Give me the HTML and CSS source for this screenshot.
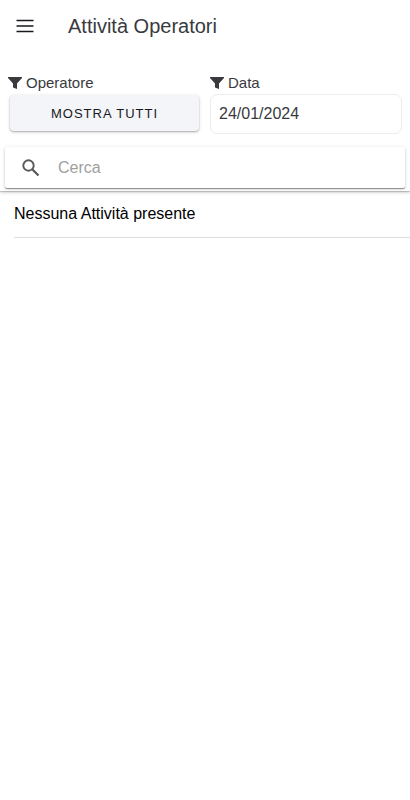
FILE: index.html
```html
<!DOCTYPE html>
<html lang="it">
<head>
<meta charset="utf-8">
<meta name="viewport" content="width=device-width, initial-scale=1">
<title>Attività Operatori</title>
<link rel="stylesheet" href="styles.css">
</head>
<body>
<header class="header">
  <div class="toolbar">
    <button class="menu-button" type="button" aria-label="Menu">
      <svg viewBox="0 0 18 14" width="18" height="14" aria-hidden="true"><path d="M0.500 1.500h17M0.500 7h17M0.500 12.500h17" stroke="currentColor" stroke-width="1.700"/></svg>
    </button>
    <h1 class="title">Attività Operatori</h1>
  </div>
  <div class="filters">
    <div class="filter">
      <label class="filter-label" for="operator">
        <svg viewBox="0 0 14 12" width="14" height="12" aria-hidden="true"><path d="M0 0h14v1L9 6.500V12L5 10.500v-4L0 1z" fill="currentColor"/></svg>
        Operatore
      </label>
      <button class="operator-button" id="operator" type="button">MOSTRA TUTTI</button>
    </div>
    <div class="filter">
      <label class="filter-label" for="date">
        <svg viewBox="0 0 14 12" width="14" height="12" aria-hidden="true"><path d="M0 0h14v1L9 6.500V12L5 10.500v-4L0 1z" fill="currentColor"/></svg>
        Data
      </label>
      <input class="date-input" id="date" type="text" value="24/01/2024">
    </div>
  </div>
  <div class="search">
    <svg viewBox="0 0 18 18" width="18" height="18" aria-hidden="true"><circle cx="6.500" cy="6.500" r="5.200" fill="none" stroke="currentColor" stroke-width="1.900"/><path d="M10.500 10.500l6 6" stroke="currentColor" stroke-width="2.200"/></svg>
    <input class="search-input" type="search" placeholder="Cerca" aria-label="Cerca">
  </div>
</header>
<main>
  <ul class="list">
    <li class="list-item">Nessuna Attività presente</li>
  </ul>
</main>
</body>
</html>
```
FILE: styles.css
```css
* {
  box-sizing: border-box;
}

body {
  margin: 0;
  background: #fff;
  color: #000;
  font: 16px/20px "Liberation Sans", Arial, sans-serif;
}

button,
input {
  margin: 0;
  font-family: inherit;
}

svg {
  display: block;
  flex: none;
}

.header {
  padding-bottom: 3px;
  color: #383a3e;
  box-shadow: 0 1px 1px rgba(0, 0, 0, 0.16), 0 2px 3px rgba(0, 0, 0, 0.14);
}

.toolbar {
  display: flex;
  align-items: center;
  gap: 24px;
  height: 52px;
  padding: 0 10px;
}

.menu-button {
  display: grid;
  place-items: center;
  width: 34px;
  height: 40px;
  padding: 0 4px 0 0;
  border: 0;
  background: none;
  color: #17191c;
}

.title {
  margin: 0;
  font-size: 20px;
  line-height: 24px;
  font-weight: 400;
}

.filters {
  display: grid;
  grid-template-columns: 1fr 1fr;
  gap: 10px;
  padding: 20px 8px 13px;
}

.filter-label {
  display: flex;
  align-items: center;
  gap: 4px;
  height: 22px;
  font-size: 15px;
}

.operator-button {
  display: block;
  width: calc(100% - 3px);
  height: 36px;
  margin: 1px 1px 1px 2px;
  padding: 0;
  border: 0;
  border-radius: 4px;
  background: #f4f5f8;
  box-shadow: 0 1px 2px rgba(0, 0, 0, 0.28), 0 1px 4px rgba(0, 0, 0, 0.1);
  color: #17191c;
  font-size: 13px;
  letter-spacing: 1px;
}

.date-input {
  display: block;
  width: 100%;
  height: 40px;
  padding: 0 8px;
  border: 1px solid #ededed;
  border-radius: 7px;
  background: #fff;
  color: #383a3e;
  font-size: 16px;
}

.search {
  display: flex;
  align-items: center;
  gap: 18px;
  height: 41px;
  margin: 0 5px;
  padding: 0 17px;
  border-radius: 2px;
  background: #fff;
  box-shadow: 0 1px 1px rgba(0, 0, 0, 0.42), 0 1px 4px rgba(0, 0, 0, 0.14);
  color: #55575a;
}

.search-input {
  flex: 1;
  min-width: 0;
  padding: 0;
  border: 0;
  outline: 0;
  background: none;
  font-size: 16px;
}

.search-input::placeholder {
  color: #a0a0a0;
}

.list {
  margin: 0;
  padding: 0 0 0 14px;
  list-style: none;
}

.list-item {
  padding: 13px 0;
  border-bottom: 1px solid #dedede;
}
```
